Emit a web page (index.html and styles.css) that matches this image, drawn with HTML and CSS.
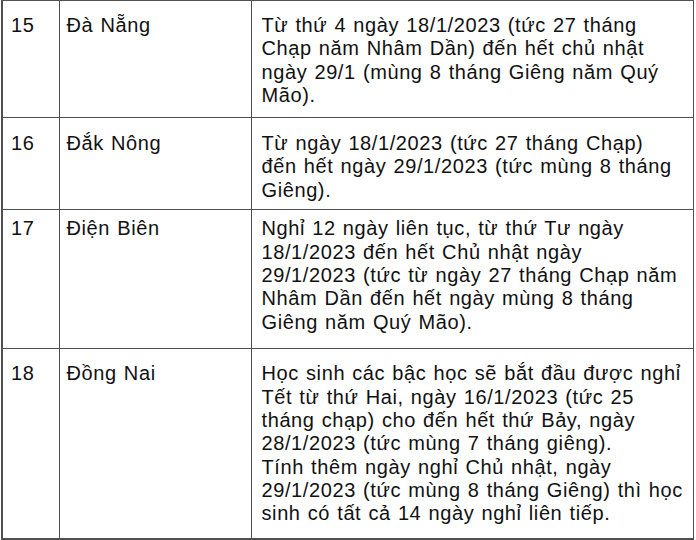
FILE: index.html
```html
<!DOCTYPE html>
<html lang="vi">
<head>
<meta charset="utf-8">
<link rel="stylesheet" href="styles.css">
</head>
<body>
<table class="holidays">
  <colgroup>
    <col class="c-no">
    <col class="c-place">
    <col class="c-desc">
  </colgroup>
  <tbody>
    <tr class="r15">
      <td class="no">15</td>
      <td class="place">Đà Nẵng</td>
      <td class="desc">Từ thứ 4 ngày 18/1/2023 (tức 27 tháng<br>Chạp năm Nhâm Dần) đến hết chủ nhật<br>ngày 29/1 (mùng 8 tháng Giêng năm Quý<br>Mão).</td>
    </tr>
    <tr class="r16">
      <td class="no">16</td>
      <td class="place">Đắk Nông</td>
      <td class="desc">Từ ngày 18/1/2023 (tức 27 tháng Chạp)<br>đến hết ngày 29/1/2023 (tức mùng 8 tháng<br>Giêng).</td>
    </tr>
    <tr class="r17">
      <td class="no">17</td>
      <td class="place">Điện Biên</td>
      <td class="desc">Nghỉ 12 ngày liên tục, từ thứ Tư ngày<br>18/1/2023 đến hết Chủ nhật ngày<br>29/1/2023 (tức từ ngày 27 tháng Chạp năm<br>Nhâm Dần đến hết ngày mùng 8 tháng<br>Giêng năm Quý Mão).</td>
    </tr>
    <tr class="r18">
      <td class="no">18</td>
      <td class="place">Đồng Nai</td>
      <td class="desc">Học sinh các bậc học sẽ bắt đầu được nghỉ<br>Tết từ thứ Hai, ngày 16/1/2023 (tức 25<br>tháng chạp) cho đến hết thứ Bảy, ngày<br>28/1/2023 (tức mùng 7 tháng giêng).<br>Tính thêm ngày nghỉ Chủ nhật, ngày<br>29/1/2023 (tức mùng 8 tháng Giêng) thì học<br>sinh có tất cả 14 ngày nghỉ liên tiếp.</td>
    </tr>
  </tbody>
</table>
</body>
</html>
```

FILE: styles.css
```css
html, body {
  margin: 0;
  padding: 0;
  background: #ffffff;
}

.holidays {
  border-collapse: collapse;
  table-layout: fixed;
  width: 691px;
  margin-left: 1px;
  font-family: "Liberation Sans", Arial, sans-serif;
  font-size: 20px;
  line-height: 23.33px;
  letter-spacing: 0.6px;
  word-spacing: 1px;
  color: #111111;
}

.c-no { width: 57px; }
.c-place { width: 192px; }
.c-desc { width: 442px; }

.holidays td {
  border: 1px solid #505050;
  vertical-align: top;
  padding: 13px 8px 8px 8px;
  white-space: nowrap;
}

.holidays td.no { border-left-width: 2px; }
.holidays td.place { padding-left: 7px; }
.holidays td.desc { padding-left: 10px; }

.holidays tr.r15 td { padding-top: 13px; padding-bottom: 9.4px; }
.holidays tr.r16 td { padding-top: 14.3px; padding-bottom: 7.3px; }
.holidays tr.r17 td { padding-top: 7px; padding-bottom: 14.3px; }
.holidays tr.r18 td {
  padding-top: 13px;
  padding-bottom: 12.4px;
  border-bottom-width: 2px;
}
```
